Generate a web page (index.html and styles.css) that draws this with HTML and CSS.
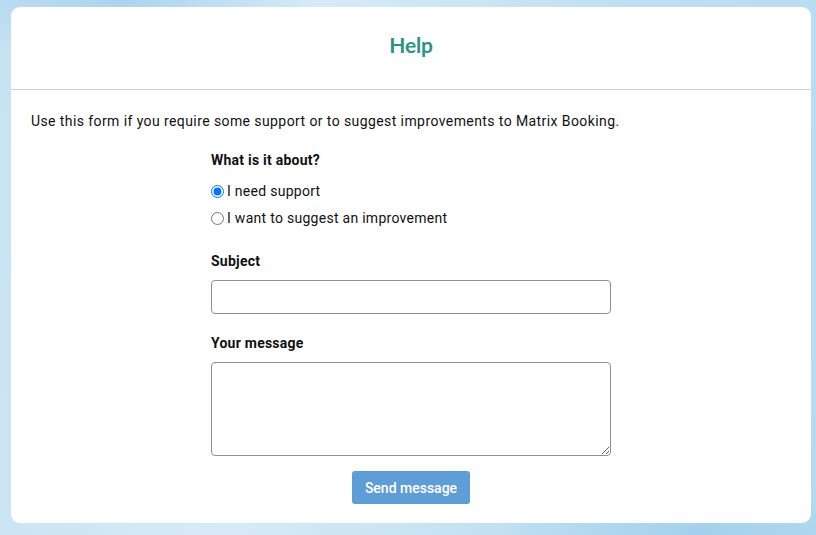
FILE: index.html
```html
<!DOCTYPE html>
<html>
<head>
<meta charset="utf-8">
<link rel="stylesheet" href="styles.css">
</head>
<body>
<div class="card">
  <header class="card-head"><h1 class="title">Help</h1></header>
  <div class="card-body">
    <p class="intro">Use this form if you require some support or to suggest improvements to Matrix Booking.</p>
    <form class="form">
      <div class="label">What is it about?</div>
      <label class="radio first"><input type="radio" name="t" checked> I need support</label>
      <label class="radio"><input type="radio" name="t"> I want to suggest an improvement</label>
      <div class="label subj">Subject</div>
      <input class="field" type="text">
      <div class="label msg">Your message</div>
      <textarea class="area"></textarea>
      <div class="actions"><button type="button" class="btn">Send message</button></div>
    </form>
  </div>
</div>
</body>
</html>
```
FILE: styles.css
```css
html, body { margin: 0; padding: 0; }
body {
  width: 816px; height: 535px; overflow: hidden;
  font-family: Roboto, "Liberation Sans", sans-serif;
  font-size: 14px; color: #111;
  background:
    radial-gradient(ellipse 200px 60px at 120px 0px, rgba(150,200,235,0.6), transparent),
    radial-gradient(ellipse 200px 60px at 700px 535px, rgba(150,200,235,0.6), transparent),
    linear-gradient(100deg, #c6e2f3 0%, #d7ebf7 35%, #bedff1 70%, #b6dbf0 100%);
  padding-top: 7px; box-sizing: border-box;
}
.card {
  margin-left: 11px; width: 800px; height: 516px;
  background: #fff; border-radius: 9px; box-sizing: border-box;
}
.card-head {
  height: 83px; border-bottom: 1px solid #cfcfcf; box-sizing: border-box;
  display: flex; align-items: center; justify-content: center;
}
.title {
  margin: 0 0 8px; font-family: Lato, "Open Sans", sans-serif; font-weight: 700;
  font-size: 21px; color: #2b9286; letter-spacing: -0.2px;
}
.card-body { padding: 0 20px; }
.intro { margin: 21px 0 0; line-height: 20px; letter-spacing: 0.41px; }
.form { margin: 19px 0 0 180px; width: 400px; display: flex; flex-direction: column; }
.label { font-weight: 700; line-height: 20px; letter-spacing: 0.24px; }
.radio { display: flex; align-items: center; line-height: 20px; letter-spacing: 0.28px; }
.radio input { margin: 0 3px 0 0; width: 13px; height: 13px; }
.radio.first { margin-top: 11px; }
.radio + .radio { margin-top: 7px; }
.subj { margin-top: 23px; }
.field {
  margin: 9px 0 0; height: 34px; width: 400px; box-sizing: border-box;
  border: 1px solid #8f8f8f; border-radius: 4px; font: inherit; padding: 0 8px;
}
.msg { margin-top: 19px; }
.area {
  margin: 9px 0 0; height: 94px; width: 400px; box-sizing: border-box;
  border: 1px solid #8f8f8f; border-radius: 4px; font: inherit; resize: vertical; display: block;
}
.actions { display: flex; justify-content: center; margin-top: 15px; }
.btn {
  width: 118px; height: 33px; border: 0; border-radius: 3px; background: #5f9dd6;
  color: #fff; font-family: Roboto, sans-serif; font-weight: 500; font-size: 14px; padding: 0;
}
```
